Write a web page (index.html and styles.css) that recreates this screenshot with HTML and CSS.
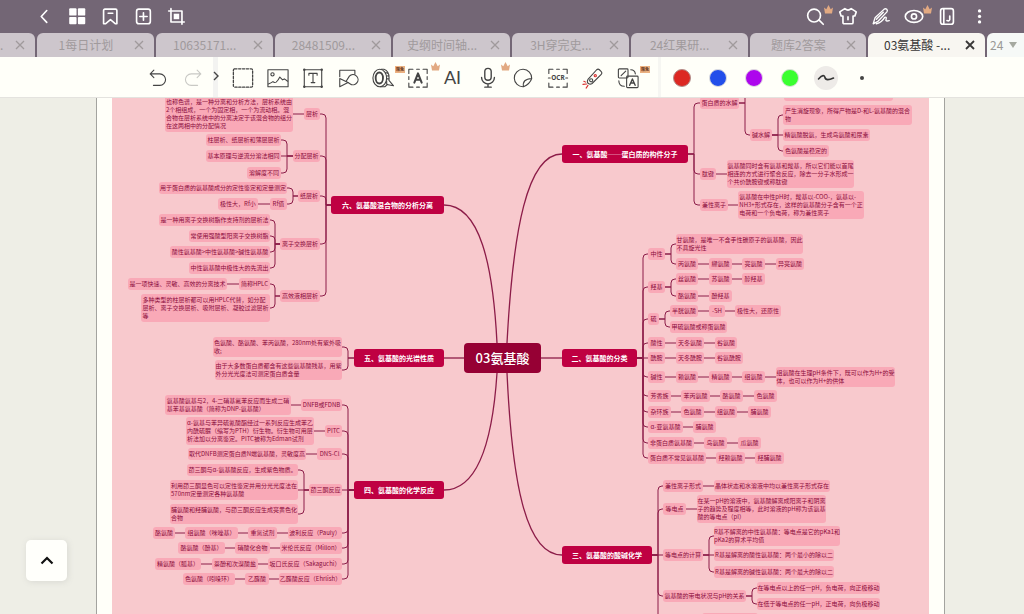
FILE: index.html
```html
<!DOCTYPE html>
<html lang="zh-CN">
<head>
<meta charset="utf-8">
<title>03氨基酸</title>
<link rel="stylesheet" href="styles.css">
</head>
<body>
<header class="topbar">
  <nav class="group">
    <button class="top-btn" aria-label="返回"><svg class="ico" viewBox="0 0 24 24"><path d="M15 6l-6 6.500 6 6.500"/></svg></button>
    <button class="top-btn" aria-label="缩略图"><svg class="ico solid" viewBox="0 0 24 24"><rect x="3.500" y="3.500" width="8" height="8" rx="1"/><rect x="13" y="3.500" width="8" height="8" rx="1"/><rect x="3.500" y="13" width="8" height="8" rx="1"/><rect x="13" y="13" width="8" height="8" rx="1"/></svg></button>
    <button class="top-btn" aria-label="书签"><svg class="ico" viewBox="0 0 24 24"><path d="M6.500 4.500h11.500q1.500 0 1.500 1.500v14.500h-1.500l-5.500-4.500L7 20.500H5V6q0-1.500 1.500-1.500z"/><path d="M10 9h5"/></svg></button>
    <button class="top-btn" aria-label="添加页面"><svg class="ico" viewBox="0 0 24 24"><rect x="5" y="4.500" width="15" height="16" rx="2.500"/><path d="M12.500 8.500v8M8.500 12.500h8"/></svg></button>
    <button class="top-btn" aria-label="裁剪"><svg class="ico" viewBox="0 0 24 24"><path d="M4 6.500h14.500V21M6.500 4v14.500H21"/><rect x="9.500" y="9.500" width="6" height="6" fill="currentColor" stroke="none"/></svg></button>
  </nav>
  <nav class="group">
    <button class="top-btn" aria-label="搜索"><svg class="ico" viewBox="0 0 24 24"><circle cx="11" cy="11.500" r="7"/><path d="M16.500 16.500l4.500 4.500"/></svg><svg class="crown" viewBox="0 0 9 9"><path d="M0 2.500l2.300 1.800L4.500 0l2.200 4.300L9 2.500 8 8.500H1z"/></svg></button>
    <button class="top-btn" aria-label="主题"><svg class="ico" viewBox="0 0 24 24"><path d="M8.500 4q3.500 3 7 0l5.500 3.500-1.500 4.500h-2v7q0 1.500-1.500 1.500H8Q6.500 20.500 6.500 19v-7h-2L3 7.500z"/><path d="M12 13v3"/></svg></button>
    <button class="top-btn" aria-label="画笔"><svg class="ico thin" viewBox="0 0 24 24"><path d="M3.500 20.500l2-6.500L15.500 4.500q1.500-1 2.800.2 1.200 1.400.2 2.800L9 17.500z"/><path d="M7 15.500l7.500-7.500M7 20.500q6-1.500 9-7 2.500-1 1.500 2-1 3 3.500 1.500"/></svg></button>
    <button class="top-btn" aria-label="查看"><svg class="ico" viewBox="0 0 24 24"><ellipse cx="12" cy="12.500" rx="9.500" ry="6.500"/><circle cx="12" cy="12.500" r="2.800"/></svg><svg class="crown" viewBox="0 0 9 9"><path d="M0 2.500l2.300 1.800L4.500 0l2.200 4.300L9 2.500 8 8.500H1z"/></svg></button>
    <button class="top-btn" aria-label="乐谱"><svg class="ico" viewBox="0 0 24 24"><rect x="5" y="4" width="14" height="17" rx="2.500"/><path d="M8.500 4.500v16M15 12v4q-.5 2-3 1"/></svg></button>
    <button class="top-btn" aria-label="更多"><svg class="ico solid" viewBox="0 0 24 24"><circle cx="11.500" cy="6.500" r="1.800"/><circle cx="11.500" cy="12.500" r="1.800"/><circle cx="11.500" cy="18.500" r="1.800"/></svg></button>
  </nav>
</header>

<div class="tabs">
  <div class="tab first"><span class="name">.</span><button class="close" aria-label="关闭"><svg viewBox="0 0 10 10"><path d="M1 1l8 8M9 1l-8 8"/></svg></button></div>
  <div class="tab"><span class="name">1每日计划</span><button class="close" aria-label="关闭"><svg viewBox="0 0 10 10"><path d="M1 1l8 8M9 1l-8 8"/></svg></button></div>
  <div class="tab"><span class="name">10635171...</span><button class="close" aria-label="关闭"><svg viewBox="0 0 10 10"><path d="M1 1l8 8M9 1l-8 8"/></svg></button></div>
  <div class="tab"><span class="name">28481509...</span><button class="close" aria-label="关闭"><svg viewBox="0 0 10 10"><path d="M1 1l8 8M9 1l-8 8"/></svg></button></div>
  <div class="tab"><span class="name">史纲时间轴...</span><button class="close" aria-label="关闭"><svg viewBox="0 0 10 10"><path d="M1 1l8 8M9 1l-8 8"/></svg></button></div>
  <div class="tab"><span class="name">3H穿完史...</span><button class="close" aria-label="关闭"><svg viewBox="0 0 10 10"><path d="M1 1l8 8M9 1l-8 8"/></svg></button></div>
  <div class="tab"><span class="name">24红果研...</span><button class="close" aria-label="关闭"><svg viewBox="0 0 10 10"><path d="M1 1l8 8M9 1l-8 8"/></svg></button></div>
  <div class="tab"><span class="name">题库2答案</span><button class="close" aria-label="关闭"><svg viewBox="0 0 10 10"><path d="M1 1l8 8M9 1l-8 8"/></svg></button></div>
  <div class="tab active"><span class="name">03氨基酸 -...</span><button class="close" aria-label="关闭"><svg viewBox="0 0 10 10"><path d="M1 1l8 8M9 1l-8 8"/></svg></button></div>
  <button class="tab last"><span>24</span><svg class="caret" viewBox="0 0 8 6"><path d="M0 0h8L4 6z"/></svg></button>
</div>

<div class="toolbar">
  <div class="history">
    <button class="tool" aria-label="撤销"><svg class="ico" viewBox="0 0 24 24"><path d="M7.500 3.500L3.500 7.500l4 4M3.500 7.500h10.500a6.200 6.200 0 0 1 0 12.500H7"/></svg></button>
    <button class="tool faded" aria-label="重做"><svg class="ico" viewBox="0 0 24 24"><path d="M16.500 3.500l4 4-4 4M20.500 7.500H10a6.200 6.200 0 0 0 0 12.500h7"/></svg></button>
  </div>
  <button class="fold" aria-label="展开"><svg viewBox="0 0 6 10"><path d="M1 1l4 4-4 4"/></svg></button>
  <div class="tools">
    <button class="tool" aria-label="选择"><svg class="ico" viewBox="0 0 24 24"><rect x="1.500" y="2" width="21" height="20" rx="1.500" stroke-dasharray="2.500 1.700" stroke-width="1.400"/></svg></button>
    <button class="tool" aria-label="图片"><svg class="ico" viewBox="0 0 24 24"><rect x="1" y="3" width="22" height="18.500"/><circle cx="6" cy="8" r="1.800"/><path d="M1.500 18.500q3-1 5-2.500 1.500 1.500 3.500.5 2-1.500 4-5.500l3 3 2-1 3.500 2.500"/></svg></button>
    <button class="tool" aria-label="文本"><svg class="ico" viewBox="0 0 24 24"><rect x="2.500" y="3" width="19" height="18.500"/><path d="M7.500 9V7h9v2M12 7v10M10 17h4"/><g fill="currentColor" stroke="none"><circle cx="2.500" cy="3" r="1.300"/><circle cx="21.500" cy="3" r="1.300"/><circle cx="2.500" cy="21.500" r="1.300"/><circle cx="21.500" cy="21.500" r="1.300"/></g></svg></button>
    <button class="tool" aria-label="形状"><svg class="ico" viewBox="0 0 24 24"><path d="M3 10.500V3.500h16.500v4M3 12.500l9 4.500-9 4.500z"/><path d="M10 15.500l3.500-5.500a5.500 5.500 0 1 1 1 8.500L12 17"/></svg></button>
    <button class="tool" aria-label="胶带"><svg class="ico" viewBox="0 0 24 24"><ellipse cx="8.500" cy="12" rx="7.500" ry="9.500"/><ellipse cx="8" cy="12" rx="4" ry="6" stroke-width="2"/><path d="M10 2.500h3q6.500 2 5.500 12L23.500 20.500 16 19v-4M15 6l2.500 1M16 9.500l2.500.5M16 13h2.500M9 21.500h5l3-2.500"/></svg><span class="badge">限免</span></button>
    <button class="tool" aria-label="文字识别"><svg class="ico" viewBox="0 0 24 24"><path d="M2 7V2.500h4.500M17.500 2.500H22V7M2 17.500V22h4.500M17.500 22H22v-4.500M10.500 2.500h3M10.500 22h3M2 10.500v3M22 10.500v3"/><path d="M8 17l4-10 4 10M9.500 14h5" stroke-width="2.200"/></svg><svg class="crown" viewBox="0 0 9 9"><path d="M0 2.500l2.300 1.800L4.500 0l2.200 4.300L9 2.500 8 8.500H1z"/></svg></button>
    <button class="tool ai">AI</button>
    <button class="tool" aria-label="录音"><svg class="ico" viewBox="0 0 24 24"><rect x="8.500" y="1.500" width="7" height="13" rx="3.500" stroke-width="1.500"/><path d="M5 11.500a7 7 0 0 0 14 0M12 18.500v3.500M8.500 22h7" stroke-width="1.500"/></svg><svg class="crown" viewBox="0 0 9 9"><path d="M0 2.500l2.300 1.800L4.500 0l2.200 4.300L9 2.500 8 8.500H1z"/></svg></button>
    <button class="tool" aria-label="贴纸"><svg class="ico" viewBox="0 0 24 24"><path d="M12.500 21.500A9.500 9.500 0 1 1 21.500 12.500q-2 6-9 9zM12.500 21.500q-1.500-8.500 9-9"/></svg></button>
    <button class="tool" aria-label="OCR"><svg class="ico" viewBox="0 0 24 24"><path d="M2 7V2.500h4.500M17.500 2.500H22V7M2 17.500V22h4.500M17.500 22H22v-4.500M10.500 2.500h3M10.500 22h3M1.500 12h2M20.500 12h2"/><text x="12" y="14.500" class="ocr">OCR</text></svg></button>
    <button class="tool" aria-label="激光笔"><svg class="ico" viewBox="0 0 24 24"><path d="M6.500 13.500L16 3q1.500-1.500 3 0l2 2q1.500 1.500 0 3l-10 10q-2 1.500-4 0t-.5-4.500z"/><circle cx="10" cy="14.500" r="1.700"/><g class="laser"><circle cx="14.500" cy="9.500" r="1.200"/><path d="M4 16.500l-2-1M5 18.500l-4 .5M6.500 20l-2 3"/></g></svg></button>
    <button class="tool" aria-label="翻译"><svg class="ico" viewBox="0 0 24 24"><rect x="1.500" y="2" width="10.500" height="10" rx="1"/><path d="M4.500 9.500l5-5M15 3q4.500 0 5 4.500M2 15q0 6 6 6"/><rect x="10.500" y="10" width="12.500" height="12.500" rx="1"/><path d="M13.800 20l3-7 3 7M15 17.500h3.600" stroke-width="1.500"/></svg><span class="badge">限免</span></button>
  </div>
  <div class="pens">
    <button class="pen" aria-label="红色"><span class="dot red"></span></button>
    <button class="pen" aria-label="蓝色"><span class="dot blue"></span></button>
    <button class="pen" aria-label="紫色"><span class="dot purple"></span></button>
    <button class="pen" aria-label="绿色"><span class="dot green"></span></button>
    <button class="pen" aria-label="线型"><span class="stroke-kind"><svg viewBox="0 0 24 24"><path d="M4.500 13c4-4.500 6-4 6.500-1.500.5 3 4 2.500 8.500.5"/></svg></span></button>
    <button class="pen" aria-label="粗细"><span class="point"></span></button>
  </div>
</div>

<main class="desk">
  <div class="sheet">
    <div class="map" id="map"><svg class="links" id="links"></svg></div>
  </div>
  <button class="up" aria-label="收起"><svg viewBox="0 0 14 9"><path d="M1.500 7.500L7 2l5.500 5.500"/></svg></button>
</main>
<script src="map.js"></script>
</body>
</html>
```
FILE: styles.css
```css
* { box-sizing: border-box; }

body {
  margin: 0;
  height: 100vh;
  display: flex;
  flex-direction: column;
  overflow: hidden;
  background: #736675;
  font-family: "Noto Sans CJK SC", "Noto Sans", sans-serif;
}

button {
  margin: 0;
  padding: 0;
  border: 0;
  background: none;
  color: inherit;
  font: inherit;
}

.ico {
  display: block;
  width: 24px;
  height: 24px;
  fill: none;
  stroke: currentColor;
  stroke-width: 1.200;
  stroke-linejoin: round;
  stroke-linecap: round;
}
.ico.solid { fill: currentColor; stroke: none; }

.topbar {
  display: flex;
  justify-content: space-between;
  flex: none;
  height: 33px;
  padding: 0 28px 2px 27px;
  color: #fff;
}
.group { display: flex; }
.top-btn {
  position: relative;
  display: grid;
  place-items: center;
  width: 33px;
}
.top-btn .ico { width: 22px; height: 22px; stroke-width: 1.800; }
.top-btn .ico.solid { stroke: none; }
.top-btn .ico.thin { stroke-width: 1.500; }
.crown {
  position: absolute;
  top: 5px;
  right: -2px;
  width: 9px;
  height: 9px;
  fill: #e2a982;
}
.tool .crown { right: -5px; }

.tabs { display: flex; flex: none; gap: 2px; height: 24px; }
.tab {
  display: flex;
  flex: 1;
  align-items: center;
  min-width: 0;
  padding: 0 8px 0 3px;
  border-radius: 6px 6px 0 0;
  background: #cdc6cc;
  color: #a09a9c;
  font-size: 12px;
  line-height: 24px;
}
.name { flex: 1; text-align: center; white-space: nowrap; }
.close { display: grid; place-items: center; width: 14px; height: 24px; }
.close svg {
  width: 10px;
  height: 10px;
  fill: none;
  stroke: currentColor;
  stroke-width: 1.300;
}
.tab.active { background: #f8f6f1; color: #393737; }
.tab.active .close svg { stroke-width: 1.800; }
.tab.first { flex: 0 0 35px; padding-left: 0; border-top-left-radius: 0; }
.tab.first .name { text-align: left; }
.tab.last {
  flex: 0 0 37px;
  gap: 6px;
  border-top-right-radius: 0;
  background: #f6f9f7;
  color: #9a9a96;
}
.caret { width: 8px; height: 6px; flex: none; fill: #a5a9a0; }

.toolbar {
  display: flex;
  flex: none;
  height: 41px;
  border-bottom: 1px solid #e4e3df;
  background: #fffff9;
  color: #444;
}
.history { display: flex; justify-content: flex-end; width: 213px; padding-right: 3px; }
.tool {
  position: relative;
  display: grid;
  place-items: center;
  width: 35px;
  height: 41px;
}
.faded { color: #c9c9c5; }
.fold {
  display: grid;
  place-items: center;
  width: 5px;
  height: 40px;
  padding-bottom: 3px;
  background: #f3f3f1;
}
.fold svg {
  width: 6px;
  height: 10px;
  fill: none;
  stroke: #444;
  stroke-width: 1.400;
}
.tools { display: flex; width: 440px; padding-left: 7px; }
.history .ico, .tools .ico { width: 22px; height: 22px; }
.tool.ai {
  font-family: Lato, sans-serif;
  font-size: 18px;
  line-height: 41px;
}
.ocr {
  fill: #444;
  stroke: none;
  font-family: "Noto Sans", sans-serif;
  font-size: 7px;
  font-weight: 700;
  text-anchor: middle;
}
.laser { stroke: #d8302f; }
.badge {
  position: absolute;
  top: 9px;
  left: 30px;
  padding: 0 1px;
  background: #ebb182;
  color: #61321b;
  font-size: 4px;
  font-weight: 700;
  line-height: 7px;
  white-space: nowrap;
}
.pens {
  display: flex;
  flex: 1;
  padding-left: 3px;
  border-left: 3px solid #f6f6f2;
}
.pen { display: grid; place-items: center; width: 36px; height: 41px; }
.dot {
  width: 18px;
  height: 18px;
  border: 1px solid #dedede;
  border-radius: 50%;
}
.red { border-color: #b28d8a; background: #dc2822; }
.blue { background: #224eea; }
.purple { background: #ad06ed; }
.green { background: #3aff30; }
.stroke-kind { width: 24px; height: 24px; border-radius: 50%; background: #eeebe8; }
.stroke-kind svg {
  display: block;
  fill: none;
  stroke: #333;
  stroke-width: 1.600;
  stroke-linecap: round;
}
.point { width: 4px; height: 4px; border-radius: 50%; background: #444; }

.desk {
  position: relative;
  flex: 1;
  min-height: 0;
  padding: 0 79px 0 96px;
  overflow: hidden;
  background: #eeeee6;
}
.sheet {
  height: 100%;
  padding: 0 15px;
  border: solid #a3a39f;
  border-width: 0 1px;
  background: #fffff9;
}
.map {
  position: relative;
  height: 100%;
  overflow: hidden;
  background: #f8c9cd;
}
.links {
  position: absolute;
  inset: 0;
  width: 100%;
  height: 100%;
  fill: none;
  stroke: #8c1c48;
  stroke-width: 1;
}
.links .curve { stroke-width: 1.300; }
.node {
  position: absolute;
  display: flex;
  align-items: center;
  justify-content: center;
  padding: 2px 0;
  border-radius: 3px;
  background: #f9a9b7;
  color: #8b0c3c;
  font-size: 6px;
  line-height: 8px;
  white-space: pre;
}
.node.branch {
  border-radius: 3px;
  background: #bf0042;
  color: #fff;
  font-size: 7px;
  font-weight: 700;
}
.node.root {
  border-radius: 4px;
  background: #960034;
  color: #fff;
  font-size: 13px;
  font-weight: 500;
}

.up {
  position: absolute;
  bottom: 33px;
  left: 26px;
  display: grid;
  place-items: center;
  width: 41px;
  height: 41px;
  border-radius: 5px;
  background: #fffffb;
  box-shadow: 1px 1px 6px #d8d8d2;
}
.up svg {
  width: 14px;
  height: 9px;
  fill: none;
  stroke: #111;
  stroke-width: 2.200;
}
```
FILE: map.js
```js
// Each node: [left, right, middle y, text, children]
const ORIGIN = { x: 112, y: 98 };
const LINE = 8;

// A row of nodes joined one after another at the same height
function chain(y, ...items) {
  return items.reduceRight((next, [l, r, t]) => [l, r, y, t, next ? [next] : []], null);
}

const branches = [
  { curve: "M562 154C527 154 513 230 507 343", node: [562, 688, 154, "一、氨基酸——蛋白质的构件分子", [
    [700, 739, 103, "蛋白质的水解", [
      [750, 772, 70, "", [[784, 893, 95, ""]]],
      [750, 772, 135, "碱水解", [
        [783, 912, 115, "产生消旋现象，所得产物是D-和L-氨基酸的混合\n物"],
        [783, 870, 135, "精氨酸脱氨，生成鸟氨酸和尿素"],
        [783, 829, 151, "色氨酸是稳定的"]]]]],
    chain(174, [700, 716, "肽键"], [727, 854, "氨基酸同时含有氨基和羧基，所以它们能以首尾\n相连的方式进行聚合反应，除去一分子水形成一\n个共价酰胺键或称肽键"]),
    chain(205, [700, 728, "兼性离子"], [738, 864, "氨基酸在中性pH时，羧基以-COO-，氨基以-\nNH3+形式存在，这样的氨基酸分子含有一个正\n电荷和一个负电荷，称为兼性离子"])]] },
  { curve: "M541 358H562", node: [562, 637, 358, "二、氨基酸的分类", [
    [648, 665, 254, "中性", [
      [676, 803, 244, "甘氨酸，是唯一不含手性碳原子的氨基酸，因此\n不具旋光性"],
      chain(264, [676, 698, "丙氨酸"], [709, 732, "缬氨酸"], [742, 765, "亮氨酸"], [776, 804, "异亮氨酸"])]],
    [648, 665, 287, "羟基", [
      chain(279, [676, 698, "丝氨酸"], [709, 732, "苏氨酸"], [742, 765, "醇羟基"]),
      chain(296, [676, 698, "酪氨酸"], [709, 732, "酚羟基"])]],
    [648, 659, 319, "硫", [
      chain(311, [670, 698, "半胱氨酸"], [709, 725, "-SH"], [735, 781, "极性大，还原性"]),
      [670, 727, 327, "甲硫氨酸或称蛋氨酸"]]],
    chain(343, [648, 665, "酸性"], [676, 704, "天冬氨酸"], [715, 737, "谷氨酸"]),
    chain(358, [648, 665, "酰胺"], [676, 704, "天冬酰胺"], [715, 743, "谷氨酰胺"]),
    chain(377, [648, 665, "碱性"], [676, 698, "赖氨酸"], [709, 732, "精氨酸"], [742, 765, "组氨酸"], [776, 895, "组氨酸在生理pH条件下，既可以作为H+的受\n体，也可以作为H+的供体"]),
    chain(396, [648, 671, "芳香族"], [681, 710, "苯丙氨酸"], [720, 743, "酪氨酸"], [754, 777, "色氨酸"]),
    chain(412, [648, 671, "杂环族"], [681, 704, "色氨酸"], [715, 737, "组氨酸"], [748, 771, "脯氨酸"]),
    chain(427, [648, 683, "α-亚氨基酸"], [693, 716, "脯氨酸"]),
    chain(443, [648, 694, "非蛋白质氨基酸"], [704, 727, "鸟氨酸"], [738, 761, "瓜氨酸"]),
    chain(458, [648, 706, "蛋白质不常见氨基酸"], [716, 745, "羟赖氨酸"], [755, 784, "羟脯氨酸"])]] },
  { curve: "M507 373C512 480 525 555 562 555", node: [562, 652, 555, "三、氨基酸的酸碱化学", [
    chain(486, [663, 703, "兼性离子形式"], [714, 830, "晶体状态和水溶液中均以兼性离子形式存在"]),
    chain(509, [663, 686, "等电点"], [697, 826, "在某一pH的溶液中，氨基酸解离成阳离子和阴离\n子的趋势及程度相等，此时溶液的pH称为该氨基\n酸的等电点（pI）"]),
    [663, 703, 555, "等电点的计算", [
      [714, 840, 536, "R基不解离的中性氨基酸：等电点是它的pKa1和\npKa2的算术平均值"],
      [714, 834, 555, "R基是解离的酸性氨基酸：两个最小的除以二"],
      [714, 834, 572, "R基是解离的碱性氨基酸：两个最大的除以二"]]],
    [663, 746, 596, "氨基酸的带电状况与pH的关系", [
      [757, 880, 588, "在等电点以上的任一pH，负电荷，向正极移动"],
      [757, 880, 604, "在低于等电点的任一pH，正电荷，向负极移动"]]],
    [663, 691, 628, "", [[702, 758, 619, ""]]]]] },
  { left: true, curve: "M444 205C480 205 493 265 497 343", node: [331, 444, 205, "六、氨基酸混合物的分析分离", [
    chain(114, [304, 320, "层析"], [165, 293, "也称色谱，是一种分离和分析方法，层析系统由\n2个相组成，一个为固定相，一个为流动相。混\n合物在层析系统中的分离决定于该混合物的组分\n在这两相中的分配情况"]),
    [293, 320, 156, "分配层析", [
      [206, 281, 140, "柱层析、纸层析和薄层层析"],
      [206, 281, 156, "基本原理与逆流分溶法相同"],
      [247, 281, 173, "溶解度不同"]]],
    [298, 320, 196, "纸层析", [
      [159, 287, 188, "用于蛋白质的氨基酸成分的定性鉴定和定量测定"],
      chain(204, [270, 287, "Rf值"], [218, 258, "极性大，Rf小"])]],
    [280, 320, 244, "离子交换层析", [
      [159, 270, 220, "是一种用离子交换树脂作支持剂的层析法"],
      [189, 270, 236, "常使用强酸型阳离子交换树脂"],
      [170, 270, 252, "酸性氨基酸>中性氨基酸>碱性氨基酸"],
      [189, 270, 268, "中性氨基酸中极性大的先流出"]]],
    [280, 320, 296, "高效液相层析", [
      chain(284, [239, 270, "简称HPLC"], [128, 227, "是一项快速、灵敏、高效的分离技术"]),
      [141, 270, 308, "多种类型的柱层析都可以用HPLC代替，如分配\n层析、离子交换层析、吸附层析、凝胶过滤层析\n等"]]]]] },
  { left: true, curve: "M464 358H444", node: [354, 444, 358, "五、氨基酸的光谱性质", [
    [213, 342, 347, "色氨酸、酪氨酸、苯丙氨酸，280nm处有紫外吸\n收;"],
    [215, 342, 370, "由于大多数蛋白质都含有这些氨基酸残基，用紫\n外分光光度法可测定蛋白质含量"]]] },
  { left: true, curve: "M444 490C475 490 492 450 497 373", node: [354, 444, 490, "四、氨基酸的化学反应", [
    chain(405, [301, 342, "DNFB或FDNB"], [165, 291, "氨基酸氨基与2，4-二硝基氟苯反应而生成二硝\n基苯基氨基酸（简称为DNP-氨基酸）"]),
    chain(431, [325, 342, "PITC"], [186, 314, "α-氨基与苯异硫氰酸酯经过一系列反应生成苯乙\n内酰硫脲（缩写为PTH）衍生物。衍生物可用层\n析法加以分离鉴定。PITC被称为Edman试剂"]),
    chain(454, [317, 342, "DNS-Cl"], [188, 306, "取代DNFB测定蛋白质N端氨基酸，灵敏度高"]),
    [309, 342, 490, "茚三酮反应", [
      [187, 298, 470, "茚三酮与α-氨基酸反应，生成紫色物质。"],
      [170, 298, 490, "利用茚三酮显色可以定性鉴定并用分光光度法在\n570nm定量测定各种氨基酸"],
      [170, 298, 514, "脯氨酸和羟脯氨酸，与茚三酮反应生成亮黄色化\n合物"]]],
    chain(533, [288, 342, "波利反应（Pauly）"], [248, 277, "重氮试剂"], [185, 238, "组氨酸（咪唑基）"], [153, 175, "酪氨酸"]),
    chain(548, [280, 342, "米伦氏反应（Millon）"], [235, 270, "硝酸化合物"], [178, 225, "酪氨酸（酚基）"]),
    chain(564, [268, 342, "坂口氏反应（Sakaguchi）"], [212, 258, "萘酚和次溴酸盐"], [155, 201, "精氨酸（胍基）"]),
    chain(579, [279, 342, "乙醛酸反应（Ehrlish）"], [245, 269, "乙醛酸"], [183, 235, "色氨酸（吲哚环）"])]] }
];

const map = document.getElementById("map");
const links = document.getElementById("links");
const group = document.createElementNS("http://www.w3.org/2000/svg", "g");
group.setAttribute("transform", `translate(${-ORIGIN.x} ${-ORIGIN.y})`);
links.append(group);

function drawPath(d, kind) {
  const path = document.createElementNS("http://www.w3.org/2000/svg", "path");
  path.setAttribute("d", d);
  if (kind) path.setAttribute("class", kind);
  group.append(path);
}

function drawNode([l, r, y, text], kind, height) {
  const el = document.createElement("div");
  const h = height || text.split("\n").length * LINE + 4;
  el.className = kind ? `node ${kind}` : "node";
  el.textContent = text;
  el.style.left = `${l - ORIGIN.x}px`;
  el.style.top = `${y - h / 2 - ORIGIN.y}px`;
  el.style.width = `${r - l}px`;
  el.style.height = `${h}px`;
  map.append(el);
}

// Straight line for a child at the parent's height, rounded elbow otherwise
function drawTree(node, left, kind) {
  const [l, r, y, , children = []] = node;
  drawNode(node, kind, kind && 18);
  const from = left ? l : r;
  for (const child of children) {
    const to = left ? child[1] : child[0];
    const cy = child[2];
    const mid = Math.round((from + to) / 2);
    const dx = left ? -4 : 4;
    const dy = cy > y ? -4 : 4;
    drawPath(cy === y ? `M${from} ${y}H${to}` : `M${from} ${y}H${mid}V${cy + dy}Q${mid} ${cy} ${mid + dx} ${cy}H${to}`);
    drawTree(child, left);
  }
}

for (const { left, curve, node } of branches) {
  drawPath(curve, "curve");
  drawTree(node, left, "branch");
}
drawNode([464, 541, 358, "03氨基酸"], "root", 30);
```
